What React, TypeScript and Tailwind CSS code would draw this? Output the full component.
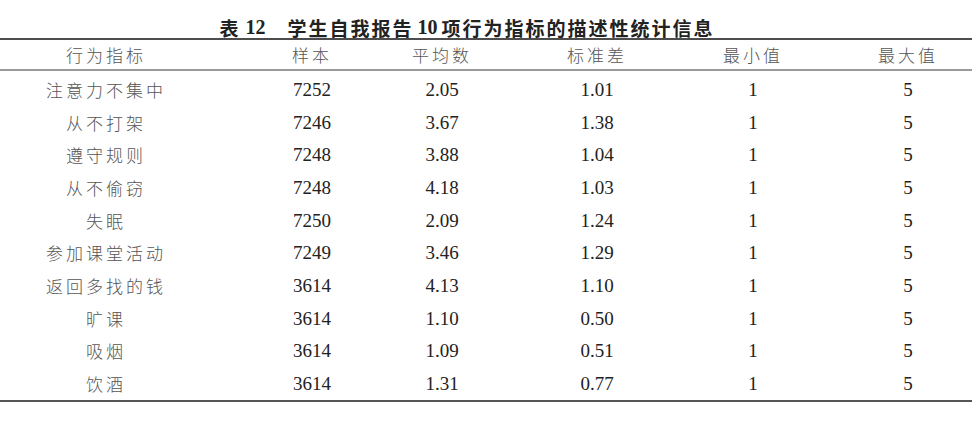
import React from 'react';

type Row = { name: string; n: string; mean: string; sd: string; min: string; max: string };

const rows: Row[] = [
  { name: '注意力不集中', n: '7252', mean: '2.05', sd: '1.01', min: '1', max: '5' },
  { name: '从不打架', n: '7246', mean: '3.67', sd: '1.38', min: '1', max: '5' },
  { name: '遵守规则', n: '7248', mean: '3.88', sd: '1.04', min: '1', max: '5' },
  { name: '从不偷窃', n: '7248', mean: '4.18', sd: '1.03', min: '1', max: '5' },
  { name: '失眠', n: '7250', mean: '2.09', sd: '1.24', min: '1', max: '5' },
  { name: '参加课堂活动', n: '7249', mean: '3.46', sd: '1.29', min: '1', max: '5' },
  { name: '返回多找的钱', n: '3614', mean: '4.13', sd: '1.10', min: '1', max: '5' },
  { name: '旷课', n: '3614', mean: '1.10', sd: '0.50', min: '1', max: '5' },
  { name: '吸烟', n: '3614', mean: '1.09', sd: '0.51', min: '1', max: '5' },
  { name: '饮酒', n: '3614', mean: '1.31', sd: '0.77', min: '1', max: '5' },
];

// each column is 120px wide, offsets put the centres where the table has them
const cols = ['ml-[46px]', 'ml-[86px]', 'ml-[10px]', 'ml-[35px]', 'ml-[36px]', 'ml-[35px]'];

const cjk = "font-['Noto_Sans_CJK_SC',sans-serif]";
const serif = "font-['Liberation_Serif','Times_New_Roman',serif]";

const Cell: React.FC<{ i: number; kind: 'zh' | 'num'; children: React.ReactNode }> = ({ i, kind, children }) => (
  <div
    className={`${cols[i]} w-[120px] shrink-0 text-center leading-none ${
      kind === 'zh'
        ? `${cjk} text-[17px] font-light tracking-[3px] text-[#555]`
        : `${serif} text-[19px] text-[#222]`
    }`}
  >
    {children}
  </div>
);

const App: React.FC = () => {
  const headers = ['行为指标', '样本', '平均数', '标准差', '最小值', '最大值'];

  return (
    <div className="w-[972px] h-[423px] bg-white overflow-hidden">
      <div className="h-[38px] flex items-end justify-center pr-[38px] pb-[1px] text-[#222] font-bold">
        <span className={`${cjk} text-[19px] leading-none`}>表</span>
        <span className={`${serif} text-[20px] leading-none ml-[7px]`}>12</span>
        <span className={`${cjk} text-[19px] leading-none tracking-[2px] ml-[22px]`}>学生自我报告</span>
        <span className={`${serif} text-[20px] leading-none mx-[4px]`}>10</span>
        <span className={`${cjk} text-[19px] leading-none tracking-[2px]`}>项行为指标的描述性统计信息</span>
      </div>
      <div className="border-t-2 border-[#4d4d4d]" />
      <div className="h-[31px] flex items-center border-b-[2px] border-[#9a9a9a]">
        {headers.map((h, i) => (
          <Cell key={h} i={i} kind="zh">
            {h}
          </Cell>
        ))}
      </div>
      <div className="pt-[2px]">
        {rows.map((r) => (
          <div key={r.name} className="h-[32.7px] flex items-center">
            <Cell i={0} kind="zh">{r.name}</Cell>
            <Cell i={1} kind="num">{r.n}</Cell>
            <Cell i={2} kind="num">{r.mean}</Cell>
            <Cell i={3} kind="num">{r.sd}</Cell>
            <Cell i={4} kind="num">{r.min}</Cell>
            <Cell i={5} kind="num">{r.max}</Cell>
          </div>
        ))}
      </div>
      <div className="border-t-2 border-[#555]" />
    </div>
  );
};

export default App;
